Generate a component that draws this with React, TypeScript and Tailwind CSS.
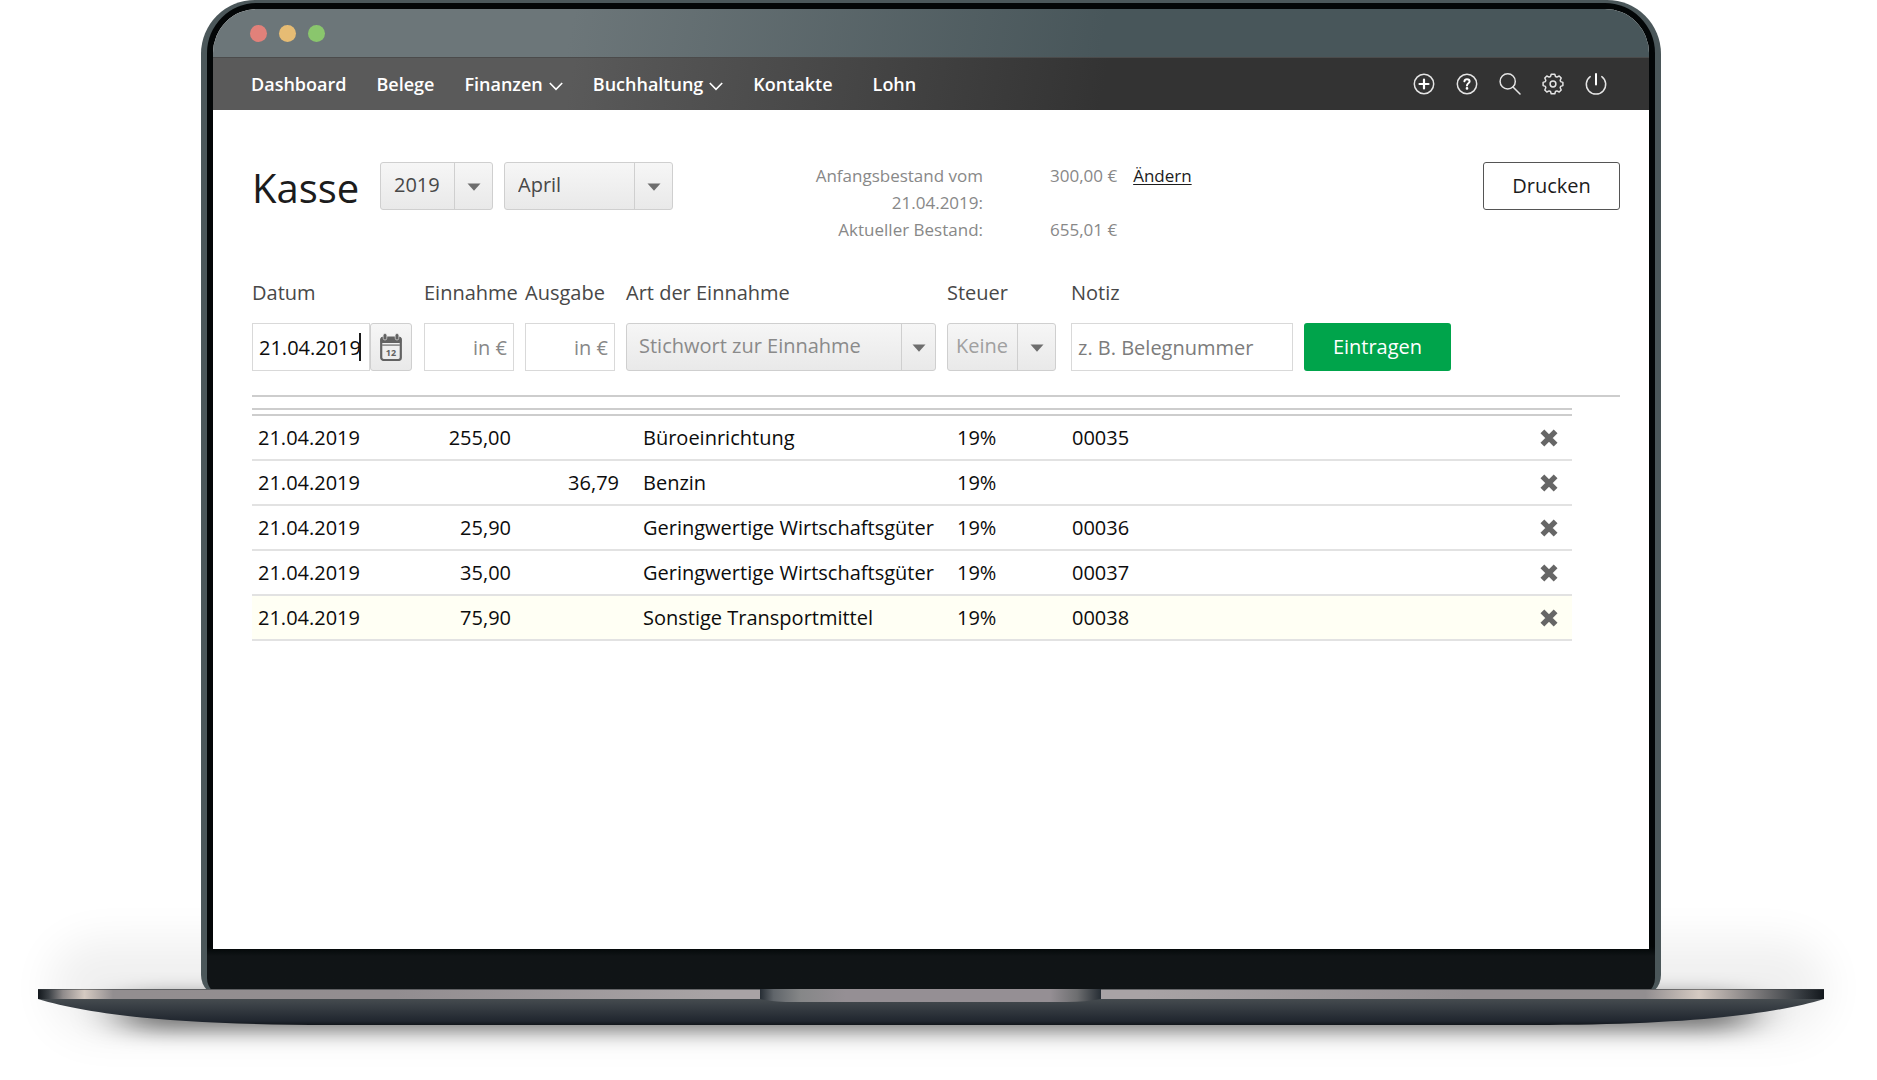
import type { ReactNode } from "react";

type Entry = {
  id: number;
  date: string;
  income?: string;
  expense?: string;
  category: string;
  tax: string;
  note?: string;
};

const entries: Entry[] = [
  { id: 1, date: "21.04.2019", income: "255,00", category: "Büroeinrichtung", tax: "19%", note: "00035" },
  { id: 2, date: "21.04.2019", expense: "36,79", category: "Benzin", tax: "19%" },
  { id: 3, date: "21.04.2019", income: "25,90", category: "Geringwertige Wirtschaftsgüter", tax: "19%", note: "00036" },
  { id: 4, date: "21.04.2019", income: "35,00", category: "Geringwertige Wirtschaftsgüter", tax: "19%", note: "00037" },
  { id: 5, date: "21.04.2019", income: "75,90", category: "Sonstige Transportmittel", tax: "19%", note: "00038" },
];

const navItems = [
  { label: "Dashboard" },
  { label: "Belege" },
  { label: "Finanzen", menu: true },
  { label: "Buchhaltung", menu: true },
  { label: "Kontakte" },
];

function NavIcon({ label, children }: { label: string; children: ReactNode }) {
  return (
    <button type="button" aria-label={label} className="cursor-pointer">
      <svg
        viewBox="0 0 22 22"
        className="w-[22px] h-[22px] block"
        fill="none"
        stroke="#e4e4e4"
        strokeWidth="1.5"
        strokeLinecap="round"
        strokeLinejoin="round"
      >
        {children}
      </svg>
    </button>
  );
}

function NavBar() {
  return (
    <nav className="flex items-center h-[53px] pl-[38px] pr-[42px] border-t border-[#4b4b4b] bg-[linear-gradient(100deg,#5a5a5a_25%,#333333_62%)] text-lg leading-6 font-semibold text-white">
      <div className="flex items-center gap-[30px]">
        {navItems.map((item) => (
          <a key={item.label} href="#" className="flex items-center gap-1.5">
            {item.label}
            {item.menu && (
              <svg viewBox="0 0 14 9" className="w-3.5 h-[9px] mt-1" fill="none" stroke="#fff" strokeWidth="1.6">
                <path d="M0.8 1 L7 7.4 L13.2 1" />
              </svg>
            )}
          </a>
        ))}
        <a href="#" className="ml-2.5">
          Lohn
        </a>
      </div>

      <div className="flex items-center gap-[21px] ml-auto">
        <NavIcon label="Neu">
          <circle cx="11" cy="11" r="9.7" />
          <path d="M11 6.5 V15.5 M6.5 11 H15.5" stroke="#fff" strokeWidth="2.2" />
        </NavIcon>
        <NavIcon label="Hilfe">
          <circle cx="11" cy="11" r="9.7" />
          <path
            d="M8.4 8.3 C8.6 6.9 9.6 6.2 11 6.2 C12.5 6.2 13.6 7 13.6 8.4 C13.6 10.3 11 10.2 11 12.4"
            stroke="#fff"
            strokeWidth="2"
          />
          <circle cx="11" cy="15.4" r="0.6" fill="#fff" stroke="#fff" />
        </NavIcon>
        <NavIcon label="Suche">
          <circle cx="8.7" cy="8.4" r="7.6" />
          <path d="M14 14 L21 21" />
        </NavIcon>
        <NavIcon label="Einstellungen">
          <path d="M9.2 1.2 H12.8 L13.5 3.5 L14.9 4.1 L17.2 3 L19.2 5 L18.2 7.3 L18.6 8.6 L20.9 9.4 V12.6 L18.6 13.4 L18.2 14.7 L19.2 17 L17.2 19 L14.9 17.9 L13.5 18.5 L12.8 20.8 H9.2 L8.5 18.5 L7.1 17.9 L4.8 19 L2.8 17 L3.8 14.7 L3.4 13.4 L1.1 12.6 V9.4 L3.4 8.6 L3.8 7.3 L2.8 5 L4.8 3 L7.1 4.1 L8.5 3.5 Z" />
          <circle cx="11" cy="11" r="2.9" />
        </NavIcon>
        <NavIcon label="Abmelden">
          <path d="M5.2 3.6 A9.7 9.7 0 1 0 16.8 3.6" />
          <path d="M11 1 V11.5" stroke="#fff" strokeWidth="2" />
        </NavIcon>
      </div>
    </nav>
  );
}

type SelectBoxProps = {
  id: string;
  label?: string;
  options: string[];
  className: string;
  arrowClassName?: string;
};

function SelectBox({ id, label, options, className, arrowClassName = "w-[38px]" }: SelectBoxProps) {
  return (
    <div
      className={`relative h-12 rounded-[3px] border border-[#cfcfcf] bg-gradient-to-b from-[#f6f6f6] to-[#e9e9e9] ${className}`}
    >
      <select id={id} aria-label={label} className="appearance-none w-full h-full bg-transparent outline-none pb-0.5">
        {options.map((option) => (
          <option key={option}>{option}</option>
        ))}
      </select>
      <span
        className={`absolute inset-y-0 right-0 flex items-center justify-center border-l border-[#cfcfcf] pointer-events-none ${arrowClassName}`}
      >
        <svg viewBox="0 0 14 8" className="w-3.5 h-2 mt-0.5" fill="#6e6e6e">
          <path d="M0.5 0.5 H13.5 L7 7.8 Z" />
        </svg>
      </span>
    </div>
  );
}

function CalendarIcon() {
  return (
    <svg viewBox="0 0 22 28" className="w-[22px] h-7">
      <rect x="1.2" y="4.5" width="19.6" height="22.5" rx="2.5" fill="none" stroke="#626262" strokeWidth="2.2" />
      <rect x="0.5" y="4" width="21" height="6" rx="2" fill="#626262" />
      <rect x="2" y="11.3" width="18" height="1.6" fill="#8a8a8a" />
      <rect x="3.2" y="0.5" width="3.6" height="6.5" rx="1.8" fill="#626262" stroke="#f0f0f0" strokeWidth="0.6" />
      <rect x="15.2" y="0.5" width="3.6" height="6.5" rx="1.8" fill="#626262" stroke="#f0f0f0" strokeWidth="0.6" />
      <text x="11" y="23" textAnchor="middle" fontSize="9" fontWeight="700" fill="#626262">
        12
      </text>
    </svg>
  );
}

function CashHeader() {
  return (
    <header className="flex items-start">
      <h1 className="text-[40px] leading-[52px] text-[#1c1c1c] w-32">Kasse</h1>
      <SelectBox
        id="year"
        label="Jahr"
        options={["2019", "2018"]}
        className="w-[113px] [&>select]:pl-[13px] text-[#484848]"
      />
      <SelectBox
        id="month"
        label="Monat"
        options={["April", "Mai"]}
        className="w-[169px] ml-[11px] [&>select]:pl-[13px] text-[#484848]"
      />

      <dl className="grid grid-cols-[262px_auto_auto] text-[17px] leading-[27px] text-[#888888] ml-12">
        <dt className="text-right">Anfangsbestand vom 21.04.2019:</dt>
        <dd className="pl-[67px]">300,00 €</dd>
        <dd className="pl-4">
          <a href="#" className="text-[#1c1c1c] underline underline-offset-2">
            Ändern
          </a>
        </dd>
        <dt className="text-right">Aktueller Bestand:</dt>
        <dd className="pl-[67px]">655,01 €</dd>
      </dl>

      <button
        type="button"
        className="ml-auto w-[137px] h-12 rounded-[3px] border border-[#555555] bg-white text-[#1c1c1c] cursor-pointer"
      >
        Drucken
      </button>
    </header>
  );
}

function Field({ id, label, children }: { id: string; label: string; children: ReactNode }) {
  return (
    <div>
      <label htmlFor={id} className="block mb-4 whitespace-nowrap text-[#484848]">
        {label}
      </label>
      {children}
    </div>
  );
}

function EntryForm() {
  return (
    <form className="grid grid-cols-[161px_90px_90px_310px_113px_222px_147px] gap-x-[11px] items-end mt-9 pb-6 border-b-2 border-[#cdcdcd]">
      <Field id="date" label="Datum">
        <div className="flex">
          <div className="relative w-[118px]">
            <input
              id="date"
              type="text"
              defaultValue="21.04.2019"
              className="w-full h-12 border border-[#d9d9d9] pl-1.5 text-[#0c0c0c] outline-none"
            />
            {/* Text cursor */}
            <span className="absolute left-[107px] top-2.5 w-0.5 h-7 bg-[#1c1c1c]" />
          </div>
          <button
            type="button"
            aria-label="Kalender öffnen"
            className="flex items-center justify-center w-[42px] h-12 rounded-[3px] border border-[#cfcfcf] bg-gradient-to-b from-[#f6f6f6] to-[#e9e9e9] cursor-pointer"
          >
            <CalendarIcon />
          </button>
        </div>
      </Field>
      <Field id="income" label="Einnahme">
        <input
          id="income"
          type="text"
          placeholder="in €"
          className="block w-full h-12 border border-[#d9d9d9] pr-1.5 text-right placeholder:text-[#888888] outline-none"
        />
      </Field>
      <Field id="expense" label="Ausgabe">
        <input
          id="expense"
          type="text"
          placeholder="in €"
          className="block w-full h-12 border border-[#d9d9d9] pr-1.5 text-right placeholder:text-[#888888] outline-none"
        />
      </Field>
      <Field id="category" label="Art der Einnahme">
        <SelectBox
          id="category"
          options={["Stichwort zur Einnahme"]}
          className="[&>select]:pl-3 text-[#8a8a8a]"
          arrowClassName="w-[34px]"
        />
      </Field>
      <Field id="tax" label="Steuer">
        <SelectBox id="tax" options={["Keine", "7%", "19%"]} className="w-[109px] [&>select]:pl-2 text-[#a0a0a0]" />
      </Field>
      <Field id="note" label="Notiz">
        <input
          id="note"
          type="text"
          placeholder="z. B. Belegnummer"
          className="block w-full h-12 border border-[#d9d9d9] pl-1.5 placeholder:text-[#7c7c7c] outline-none"
        />
      </Field>
      <button type="button" className="h-12 rounded-[3px] bg-[#00a44b] text-white cursor-pointer">
        Eintragen
      </button>
    </form>
  );
}

function EntryTable() {
  return (
    <div className="mt-[11px] mr-12 pt-1 border-t-2 border-[#cdcdcd]">
      <table className="w-full table-fixed border-t-2 border-[#cdcdcd] text-[#0c0c0c]">
        <colgroup>
          <col className="w-[120px]" />
          <col className="w-[139px]" />
          <col className="w-[108px]" />
          <col className="w-[338px]" />
          <col className="w-[115px]" />
          <col />
          <col className="w-8" />
        </colgroup>
        <tbody>
          {entries.map((entry) => (
            <tr key={entry.id} className="h-[45px] border-b-2 border-[#e2e2e2] last:bg-[#fffff4]">
              <td className="pl-1.5">{entry.date}</td>
              <td className="text-right">{entry.income}</td>
              <td className="text-right">{entry.expense}</td>
              <td className="pl-6">{entry.category}</td>
              <td>{entry.tax}</td>
              <td>{entry.note}</td>
              <td>
                <button type="button" aria-label="Eintrag löschen" className="block cursor-pointer">
                  <svg viewBox="0 0 18 18" className="w-[18px] h-[18px]" stroke="#666666" strokeWidth="5.4">
                    <path d="M2.4 2.4 L15.6 15.6 M15.6 2.4 L2.4 15.6" />
                  </svg>
                </button>
              </td>
            </tr>
          ))}
        </tbody>
      </table>
    </div>
  );
}

/* Soft floor shadow, sits behind the whole device */
function FloorShadow() {
  return (
    <svg viewBox="0 0 1877 220" className="absolute bottom-0 left-0 w-full -z-10" aria-hidden="true">
      <defs>
        <filter id="wide" x="-10%" y="-100%" width="120%" height="300%">
          <feGaussianBlur stdDeviation="22" />
        </filter>
        <filter id="tight" x="-10%" y="-200%" width="120%" height="500%">
          <feGaussianBlur stdDeviation="24 10" />
        </filter>
      </defs>
      <rect x="50" y="80" width="1777" height="95" rx="45" fill="#000" opacity="0.06" filter="url(#wide)" />
      <rect x="120" y="135" width="1630" height="36" rx="18" fill="#000" opacity="0.5" filter="url(#tight)" />
    </svg>
  );
}

function LaptopBase() {
  return (
    <svg viewBox="0 0 1877 91" className="relative block w-full -mt-2" aria-hidden="true">
      <defs>
        <linearGradient id="edge" x1="38" x2="1824" y1="0" y2="0" gradientUnits="userSpaceOnUse">
          <stop offset="0" stopColor="#12171c" />
          <stop offset="0.006" stopColor="#3b4045" />
          <stop offset="0.014" stopColor="#8f8b8b" />
          <stop offset="0.026" stopColor="#d5cac2" />
          <stop offset="0.042" stopColor="#928e90" />
          <stop offset="0.2" stopColor="#928d90" />
          <stop offset="0.38" stopColor="#a8a3a5" />
          <stop offset="0.62" stopColor="#a8a3a5" />
          <stop offset="0.8" stopColor="#928d90" />
          <stop offset="0.9" stopColor="#928e90" />
          <stop offset="0.93" stopColor="#d5cac2" />
          <stop offset="0.955" stopColor="#8f8b8b" />
          <stop offset="0.985" stopColor="#3b4045" />
          <stop offset="1" stopColor="#12171c" />
        </linearGradient>
        <linearGradient id="under" x1="0" x2="0" y1="0" y2="1">
          <stop offset="0" stopColor="#454b4f" />
          <stop offset="0.35" stopColor="#363c42" />
          <stop offset="0.85" stopColor="#20262f" />
          <stop offset="1" stopColor="#12161b" />
        </linearGradient>
        <linearGradient id="notch" x1="0" x2="1" y1="0" y2="0">
          <stop offset="0" stopColor="#262d34" />
          <stop offset="0.04" stopColor="#60656a" />
          <stop offset="0.12" stopColor="#868788" />
          <stop offset="0.25" stopColor="#958f94" />
          <stop offset="0.85" stopColor="#958f94" />
          <stop offset="0.93" stopColor="#6d6e70" />
          <stop offset="1" stopColor="#262d34" />
        </linearGradient>
      </defs>
      <path d="M38 10 C90 26 180 36 330 36 H1532 C1682 36 1772 26 1824 10 Z" fill="url(#under)" />
      <rect x="38" y="0" width="1786" height="10" fill="url(#edge)" />
      <rect x="38" y="0" width="1786" height="1" fill="#3a3f42" opacity="0.6" />
      <path d="M760 0 H1101 V10 Q1086 13 1066 13 H795 Q775 13 760 10 Z" fill="url(#notch)" />
    </svg>
  );
}

export default function App() {
  return (
    <div className="relative isolate bg-white overflow-hidden font-['Open_Sans',sans-serif] text-xl leading-7">
      <FloorShadow />

      {/* Laptop lid */}
      <div className="ml-[201px] mr-[216px] px-1.5 pt-[3px] pb-px rounded-t-[54px] rounded-b-[22px] bg-[#4b575a]">
        <div className="px-1.5 pt-1.5 pb-[47px] rounded-t-[50px] rounded-b-[18px] bg-gradient-to-b from-[#030607] from-95% to-[#101416] to-96%">
          <div className="bg-white rounded-t-[44px] overflow-hidden">
            <div className="flex items-center gap-3 h-12 pl-[37px] bg-[linear-gradient(100deg,#6c7679_25%,#48565a_62%)]">
              <span className="w-[17px] h-[17px] rounded-full bg-[#e1817a]" />
              <span className="w-[17px] h-[17px] rounded-full bg-[#e6bc74]" />
              <span className="w-[17px] h-[17px] rounded-full bg-[#8ac66d]" />
            </div>
            <NavBar />

            <main className="min-h-[839px] pt-[52px] pl-[39px] pr-[29px]">
              <CashHeader />
              <EntryForm />
              <EntryTable />
            </main>
          </div>
        </div>
      </div>

      <LaptopBase />
    </div>
  );
}
